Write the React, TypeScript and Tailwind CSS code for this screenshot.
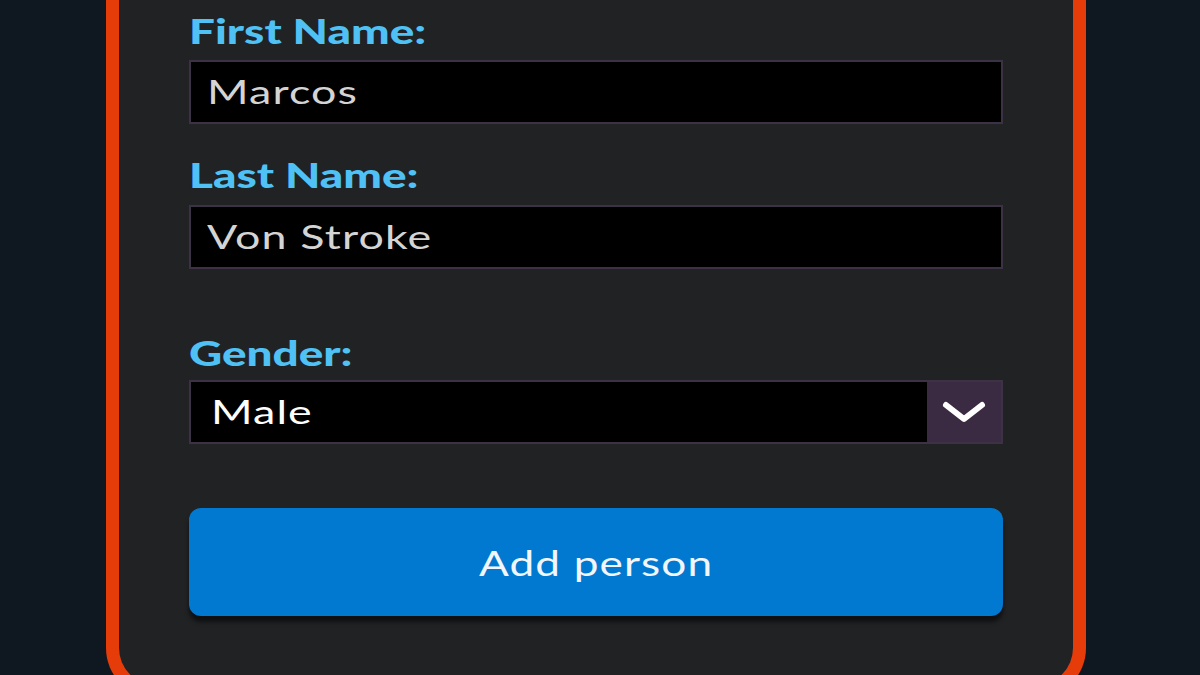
import React from "react";

function FieldLabel({ children, className = "" }: { children: React.ReactNode; className?: string }) {
  return (
    <div className={`h-10 text-[35px] leading-10 font-black text-[#4fc1f5] ${className}`}>
      <span className="inline-block origin-left scale-x-[1.31]">{children}</span>
    </div>
  );
}

function TextBox({ value }: { value: string }) {
  return (
    <div className="h-16 flex items-center bg-black border-2 border-[#3d3245] pl-4 text-[32px] text-[#d4d4d4]">
      <span className="inline-block origin-left scale-x-[1.4] tracking-wide">{value}</span>
    </div>
  );
}

export default function App() {
  return (
    <div className="h-[675px] overflow-hidden bg-[#0f1820]" style={{ fontFamily: "Lato, 'Open Sans', sans-serif" }}>
      <div className="ml-[106px] w-[980px] h-[698px] bg-[#212224] border-[13px] border-t-0 border-[#e63c0a] rounded-b-[50px] px-[70px] pt-[10px]">
        {/* first / last name */}
        <FieldLabel className="mb-[10px]">First Name:</FieldLabel>
        <TextBox value="Marcos" />

        <FieldLabel className="mt-[30px] mb-[11px]">Last Name:</FieldLabel>
        <TextBox value="Von Stroke" />

        {/* gender select */}
        <FieldLabel className="mt-[63px] mb-[8px]">Gender:</FieldLabel>
        <div className="h-16 flex bg-black border-2 border-[#3d3245]">
          <div className="flex-1 flex items-center pl-5 text-[32px] text-white">
            <span className="inline-block origin-left scale-x-[1.4] tracking-wide">Male</span>
          </div>
          <div className="w-[74px] bg-[#3a2a42] flex items-center justify-center">
            <svg width="46" height="24" viewBox="0 0 46 24" fill="none">
              <polyline points="5,5 23,19 41,5" stroke="white" strokeWidth="6" strokeLinecap="round" strokeLinejoin="round" />
            </svg>
          </div>
        </div>

        <button className="mt-16 w-full h-[108px] rounded-xl bg-[#0279d0] text-[#f2f6fa] text-[34px] font-normal shadow-[0_6px_4px_rgba(0,0,0,0.55)] flex items-center justify-center">
          <span className="inline-block scale-x-[1.3] tracking-wide">Add person</span>
        </button>
      </div>
    </div>
  );
}
